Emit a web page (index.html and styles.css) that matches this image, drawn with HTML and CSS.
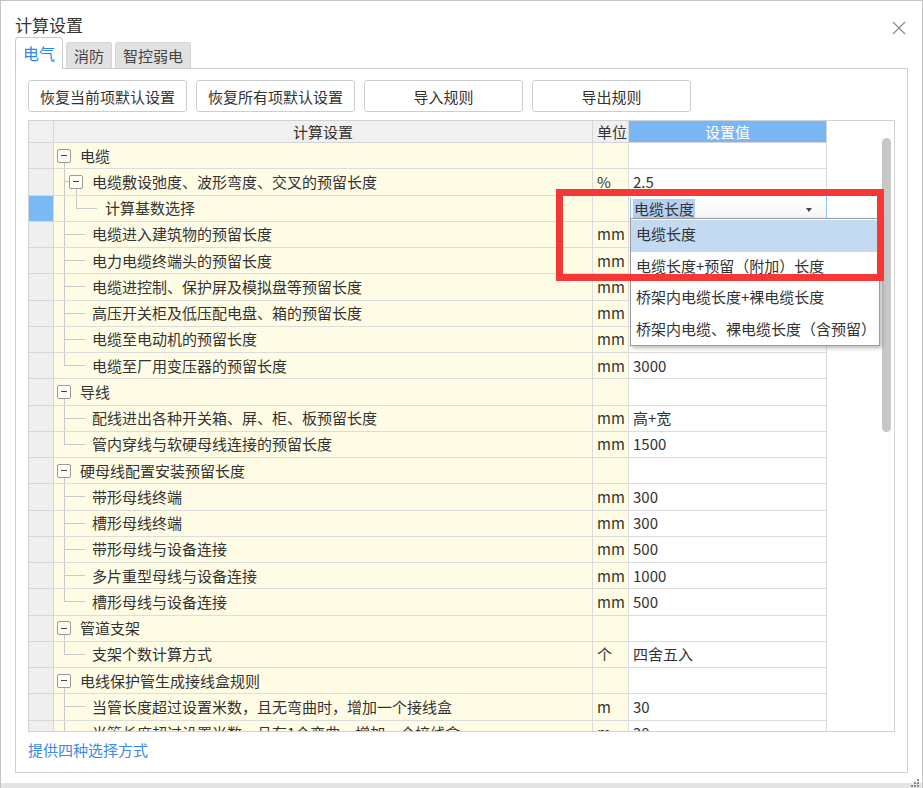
FILE: index.html
```html
<!DOCTYPE html>
<html lang="zh-CN">
<head>
<meta charset="utf-8">
<title>计算设置</title>
<link rel="stylesheet" href="styles.css">
</head>
<body>
<div class="dialog">
  <div class="titlebar">
    <span class="title">计算设置</span>
    <svg class="close" width="14" height="14" viewBox="0 0 14 14"><path d="M1 1L13 13M13 1L1 13" stroke="#8a8a8a" stroke-width="1.2" fill="none"/></svg>
  </div>
  <div class="tabs">
    <div class="tab active">电气</div>
    <div class="tab">消防</div>
    <div class="tab wide">智控弱电</div>
  </div>
  <div class="panel">
    <div class="toolbar">
      <button class="btn">恢复当前项默认设置</button>
      <button class="btn">恢复所有项默认设置</button>
      <button class="btn">导入规则</button>
      <button class="btn">导出规则</button>
    </div>
    <div class="grid">
      <div class="table">
        <div class="row head">
          <div class="c rh"></div>
          <div class="c name center">计算设置</div>
          <div class="c unit">单位</div>
          <div class="c val hsel">设置值</div>
        </div>

        <div class="row">
          <div class="c rh"></div>
          <div class="c name"><span class="node l1"><span class="box"></span></span><span class="t p">电缆</span></div>
          <div class="c unit"></div><div class="c val"></div>
        </div>
        <div class="row">
          <div class="c rh"></div>
          <div class="c name"><span class="g short"></span><span class="node"><span class="box"></span></span><span class="t p">电缆敷设弛度、波形弯度、交叉的预留长度</span></div>
          <div class="c unit">%</div><div class="c val">2.5</div>
        </div>
        <div class="row">
          <div class="c rh rsel"></div>
          <div class="c name"><span class="g pass"></span><span class="g l3"></span><span class="t l3t">计算基数选择</span></div>
          <div class="c unit"></div>
          <div class="c val edit"><div class="combo"><span class="seltext">电缆长度</span><span class="arrow"></span></div></div>
        </div>
        <div class="row">
          <div class="c rh"></div>
          <div class="c name"><span class="g tee"></span><span class="t">电缆进入建筑物的预留长度</span></div>
          <div class="c unit">mm</div><div class="c val"></div>
        </div>
        <div class="row">
          <div class="c rh"></div>
          <div class="c name"><span class="g tee"></span><span class="t">电力电缆终端头的预留长度</span></div>
          <div class="c unit">mm</div><div class="c val"></div>
        </div>
        <div class="row">
          <div class="c rh"></div>
          <div class="c name"><span class="g tee"></span><span class="t">电缆进控制、保护屏及模拟盘等预留长度</span></div>
          <div class="c unit">mm</div><div class="c val"></div>
        </div>
        <div class="row">
          <div class="c rh"></div>
          <div class="c name"><span class="g tee"></span><span class="t">高压开关柜及低压配电盘、箱的预留长度</span></div>
          <div class="c unit">mm</div><div class="c val"></div>
        </div>
        <div class="row">
          <div class="c rh"></div>
          <div class="c name"><span class="g tee"></span><span class="t">电缆至电动机的预留长度</span></div>
          <div class="c unit">mm</div><div class="c val"></div>
        </div>
        <div class="row">
          <div class="c rh"></div>
          <div class="c name"><span class="g last"></span><span class="t">电缆至厂用变压器的预留长度</span></div>
          <div class="c unit">mm</div><div class="c val">3000</div>
        </div>

        <div class="row">
          <div class="c rh"></div>
          <div class="c name"><span class="node l1"><span class="box"></span></span><span class="t p">导线</span></div>
          <div class="c unit"></div><div class="c val"></div>
        </div>
        <div class="row">
          <div class="c rh"></div>
          <div class="c name"><span class="g tee"></span><span class="t">配线进出各种开关箱、屏、柜、板预留长度</span></div>
          <div class="c unit">mm</div><div class="c val">高+宽</div>
        </div>
        <div class="row">
          <div class="c rh"></div>
          <div class="c name"><span class="g last"></span><span class="t">管内穿线与软硬母线连接的预留长度</span></div>
          <div class="c unit">mm</div><div class="c val">1500</div>
        </div>

        <div class="row">
          <div class="c rh"></div>
          <div class="c name"><span class="node l1"><span class="box"></span></span><span class="t p">硬母线配置安装预留长度</span></div>
          <div class="c unit"></div><div class="c val"></div>
        </div>
        <div class="row">
          <div class="c rh"></div>
          <div class="c name"><span class="g tee"></span><span class="t">带形母线终端</span></div>
          <div class="c unit">mm</div><div class="c val">300</div>
        </div>
        <div class="row">
          <div class="c rh"></div>
          <div class="c name"><span class="g tee"></span><span class="t">槽形母线终端</span></div>
          <div class="c unit">mm</div><div class="c val">300</div>
        </div>
        <div class="row">
          <div class="c rh"></div>
          <div class="c name"><span class="g tee"></span><span class="t">带形母线与设备连接</span></div>
          <div class="c unit">mm</div><div class="c val">500</div>
        </div>
        <div class="row">
          <div class="c rh"></div>
          <div class="c name"><span class="g tee"></span><span class="t">多片重型母线与设备连接</span></div>
          <div class="c unit">mm</div><div class="c val">1000</div>
        </div>
        <div class="row">
          <div class="c rh"></div>
          <div class="c name"><span class="g last"></span><span class="t">槽形母线与设备连接</span></div>
          <div class="c unit">mm</div><div class="c val">500</div>
        </div>

        <div class="row">
          <div class="c rh"></div>
          <div class="c name"><span class="node l1"><span class="box"></span></span><span class="t p">管道支架</span></div>
          <div class="c unit"></div><div class="c val"></div>
        </div>
        <div class="row">
          <div class="c rh"></div>
          <div class="c name"><span class="g last"></span><span class="t">支架个数计算方式</span></div>
          <div class="c unit">个</div><div class="c val">四舍五入</div>
        </div>

        <div class="row">
          <div class="c rh"></div>
          <div class="c name"><span class="node l1"><span class="box"></span></span><span class="t p">电线保护管生成接线盒规则</span></div>
          <div class="c unit"></div><div class="c val"></div>
        </div>
        <div class="row">
          <div class="c rh"></div>
          <div class="c name"><span class="g tee"></span><span class="t">当管长度超过设置米数，且无弯曲时，增加一个接线盒</span></div>
          <div class="c unit">m</div><div class="c val">30</div>
        </div>
        <div class="row">
          <div class="c rh"></div>
          <div class="c name"><span class="g tee"></span><span class="t">当管长度超过设置米数，且有1个弯曲，增加一个接线盒</span></div>
          <div class="c unit">m</div><div class="c val">20</div>
        </div>
      </div>
      <div class="filler"></div>
      <div class="scroll"><div class="thumb"></div></div>
    </div>
    <div class="hint">提供四种选择方式</div>
  </div>
  <div class="statusbar">
    <svg class="grip" width="10" height="10" viewBox="0 0 10 10">
      <rect x="8" y="2" width="2" height="2" fill="#8c8c8c"/>
      <rect x="5" y="5" width="2" height="2" fill="#8c8c8c"/>
      <rect x="8" y="5" width="2" height="2" fill="#8c8c8c"/>
      <rect x="2" y="8" width="2" height="2" fill="#8c8c8c"/>
      <rect x="5" y="8" width="2" height="2" fill="#8c8c8c"/>
      <rect x="8" y="8" width="2" height="2" fill="#8c8c8c"/>
    </svg>
  </div>

  <div class="dropdown">
    <div class="opt hl">电缆长度</div>
    <div class="opt">电缆长度+预留（附加）长度</div>
    <div class="opt">桥架内电缆长度+裸电缆长度</div>
    <div class="opt">桥架内电缆、裸电缆长度（含预留）</div>
  </div>
  <div class="redbox"></div>
</div>
</body>
</html>
```

FILE: styles.css
```css
html, body {
  margin: 0;
  padding: 0;
  background: #fff;
}
body {
  font-family: "Noto Sans CJK SC", "Noto Sans", sans-serif;
  font-size: 15px;
  color: #333;
}
.dialog {
  position: relative;
  width: 923px;
  height: 788px;
  box-sizing: border-box;
  border: 1px solid #c4c4c4;
  border-bottom: none;
  background: #fff;
  display: flex;
  flex-direction: column;
  overflow: hidden;
}
.titlebar {
  height: 36px;
  display: flex;
  align-items: flex-start;
  flex: none;
}
.title {
  margin: 13px 0 0 14px;
  font-size: 17px;
  line-height: 22px;
  color: #333;
}
.close {
  margin: 20px 16px 0 auto;
}
.tabs {
  height: 31px;
  flex: none;
  display: flex;
  align-items: flex-end;
  gap: 3px;
  padding-left: 14px;
}
.tab {
  box-sizing: border-box;
  height: 26px;
  width: 46px;
  background: #e1e1e1;
  border: 1px solid #d6d6d6;
  border-bottom: none;
  border-radius: 3px 3px 0 0;
  font-size: 15px;
  line-height: 25px;
  text-align: center;
  color: #444;
}
.tab.wide {
  width: 76px;
}
.tab.active {
  position: relative;
  z-index: 1;
  width: 48px;
  height: 32px;
  margin-bottom: -1px;
  background: #fff;
  border-color: #c9c9c9;
  border-radius: 4px 4px 0 0;
  font-size: 16px;
  line-height: 31px;
  color: #2d86e6;
}
.panel {
  flex: none;
  box-sizing: border-box;
  margin-left: 14px;
  width: 893px;
  height: 705px;
  border: 1px solid #cfcfcf;
  padding: 11px 12px 0 12px;
}
.toolbar {
  display: flex;
  gap: 9px;
}
.btn {
  box-sizing: border-box;
  width: 159px;
  height: 32px;
  background: #fff;
  border: 1px solid #cdcdcd;
  border-radius: 3px;
  font-family: inherit;
  font-size: 15px;
  color: #333;
  padding: 0;
}
.grid {
  box-sizing: border-box;
  margin-top: 8px;
  width: 867px;
  height: 612px;
  border: 1px solid #d2d2d2;
  display: flex;
  overflow: hidden;
}
.table {
  width: 798px;
  flex: none;
  overflow: hidden;
}
.filler {
  flex: 1;
}
.scroll {
  width: 14px;
  flex: none;
}
.thumb {
  margin: 17px 0 0 2px;
  width: 9px;
  height: 294px;
  border-radius: 5px;
  background: #c7c7c7;
}
.row {
  display: grid;
  grid-template-columns: 25px 539px 36px 198px;
  height: 26.25px;
}
.row.head {
  height: 22px;
}
.c {
  box-sizing: border-box;
  border-right: 1px solid #dcdcdc;
  border-bottom: 1px solid #dcdcdc;
  display: flex;
  align-items: center;
  white-space: nowrap;
  overflow: hidden;
  line-height: 20px;
}
.rh {
  background: #efefef;
  border-color: #d6d6d6;
}
.rh.rsel {
  background: #7bb8f6;
}
.name {
  background: #fffce6;
}
.unit {
  background: #fffce6;
  padding-left: 4px;
}
.val {
  background: #fff;
  padding-left: 4px;
}
.head .c {
  background: #f0f0f0;
  border-color: #d6d6d6;
}
.head .name.center {
  justify-content: center;
}
.head .val.hsel {
  background: #7ab6f4;
  color: #fff;
  justify-content: center;
  padding-left: 0;
}

/* tree guides */
.g {
  align-self: stretch;
  flex: none;
  width: 31px;
}
.g.tee {
  background:
    linear-gradient(#c9c9c9, #c9c9c9) 10px 0 / 1px 100% no-repeat,
    linear-gradient(#c9c9c9, #c9c9c9) 10px 50% / 21px 1px no-repeat;
}
.g.last {
  background:
    linear-gradient(#c9c9c9, #c9c9c9) 10px 0 / 1px 50% no-repeat,
    linear-gradient(#c9c9c9, #c9c9c9) 10px 50% / 21px 1px no-repeat;
}
.g.short {
  width: 15px;
  background:
    linear-gradient(#c9c9c9, #c9c9c9) 10px 0 / 1px 100% no-repeat,
    linear-gradient(#c9c9c9, #c9c9c9) 10px 50% / 5px 1px no-repeat;
}
.g.pass {
  width: 15px;
  background: linear-gradient(#c9c9c9, #c9c9c9) 10px 0 / 1px 100% no-repeat;
}
.g.l3 {
  width: 28px;
  background:
    linear-gradient(#c9c9c9, #c9c9c9) 7px 0 / 1px 50% no-repeat,
    linear-gradient(#c9c9c9, #c9c9c9) 7px 50% / 21px 1px no-repeat;
}
.node {
  align-self: stretch;
  flex: none;
  display: flex;
  align-items: center;
  background: linear-gradient(#c9c9c9, #c9c9c9) 7px 100% / 1px 50% no-repeat;
}
.node.l1 {
  margin-left: 3px;
}
.box {
  box-sizing: border-box;
  width: 14px;
  height: 14px;
  border: 1px solid #9a9a9a;
  border-radius: 2px;
  background: linear-gradient(#444, #444) center / 6px 1px no-repeat, #fffef6;
}
.t {
  margin-left: 7px;
}
.t.p {
  margin-left: 9px;
}
.t.l3t {
  margin-left: 8px;
}

/* editor combo */
.val.edit {
  padding: 2px 0 0 1px;
  align-items: stretch;
  border-right-color: #8fc1f4;
}
.combo {
  flex: 1;
  display: flex;
  align-items: center;
  border-left: 1px solid #8fc1f4;
  background: linear-gradient(#fff, #f4f4f4);
  padding-left: 2px;
}
.seltext {
  background: #b5cff0;
  line-height: 20px;
  padding: 0 1px;
}
.arrow {
  margin: 1px 0 0 auto;
  margin-right: 14px;
  width: 0;
  height: 0;
  border-left: 3px solid transparent;
  border-right: 3px solid transparent;
  border-top: 4px solid #444;
}

.hint {
  margin-top: 8px;
  line-height: 20px;
  color: #3a8ae6;
}
.statusbar {
  margin-top: auto;
  height: 5px;
  background: #e4e4e4;
  display: flex;
  justify-content: flex-end;
  align-items: flex-end;
}
.grip {
  margin: 0 3px 1px 0;
}

/* overlays */
.dropdown {
  position: absolute;
  left: 629px;
  top: 217px;
  width: 250px;
  height: 128px;
  box-sizing: border-box;
  background: #fff;
  border: 1px solid #9c9c9c;
  box-shadow: 2px 2px 4px rgba(0, 0, 0, 0.28);
  padding-top: 1px;
}
.opt {
  height: 31.5px;
  line-height: 28px;
  padding-left: 5px;
  white-space: nowrap;
  color: #333;
}
.opt.hl {
  background: #c4daf2;
}
.redbox {
  position: absolute;
  left: 555px;
  top: 188px;
  width: 328px;
  height: 92px;
  box-sizing: border-box;
  border: 7px solid #f43838;
}
```
